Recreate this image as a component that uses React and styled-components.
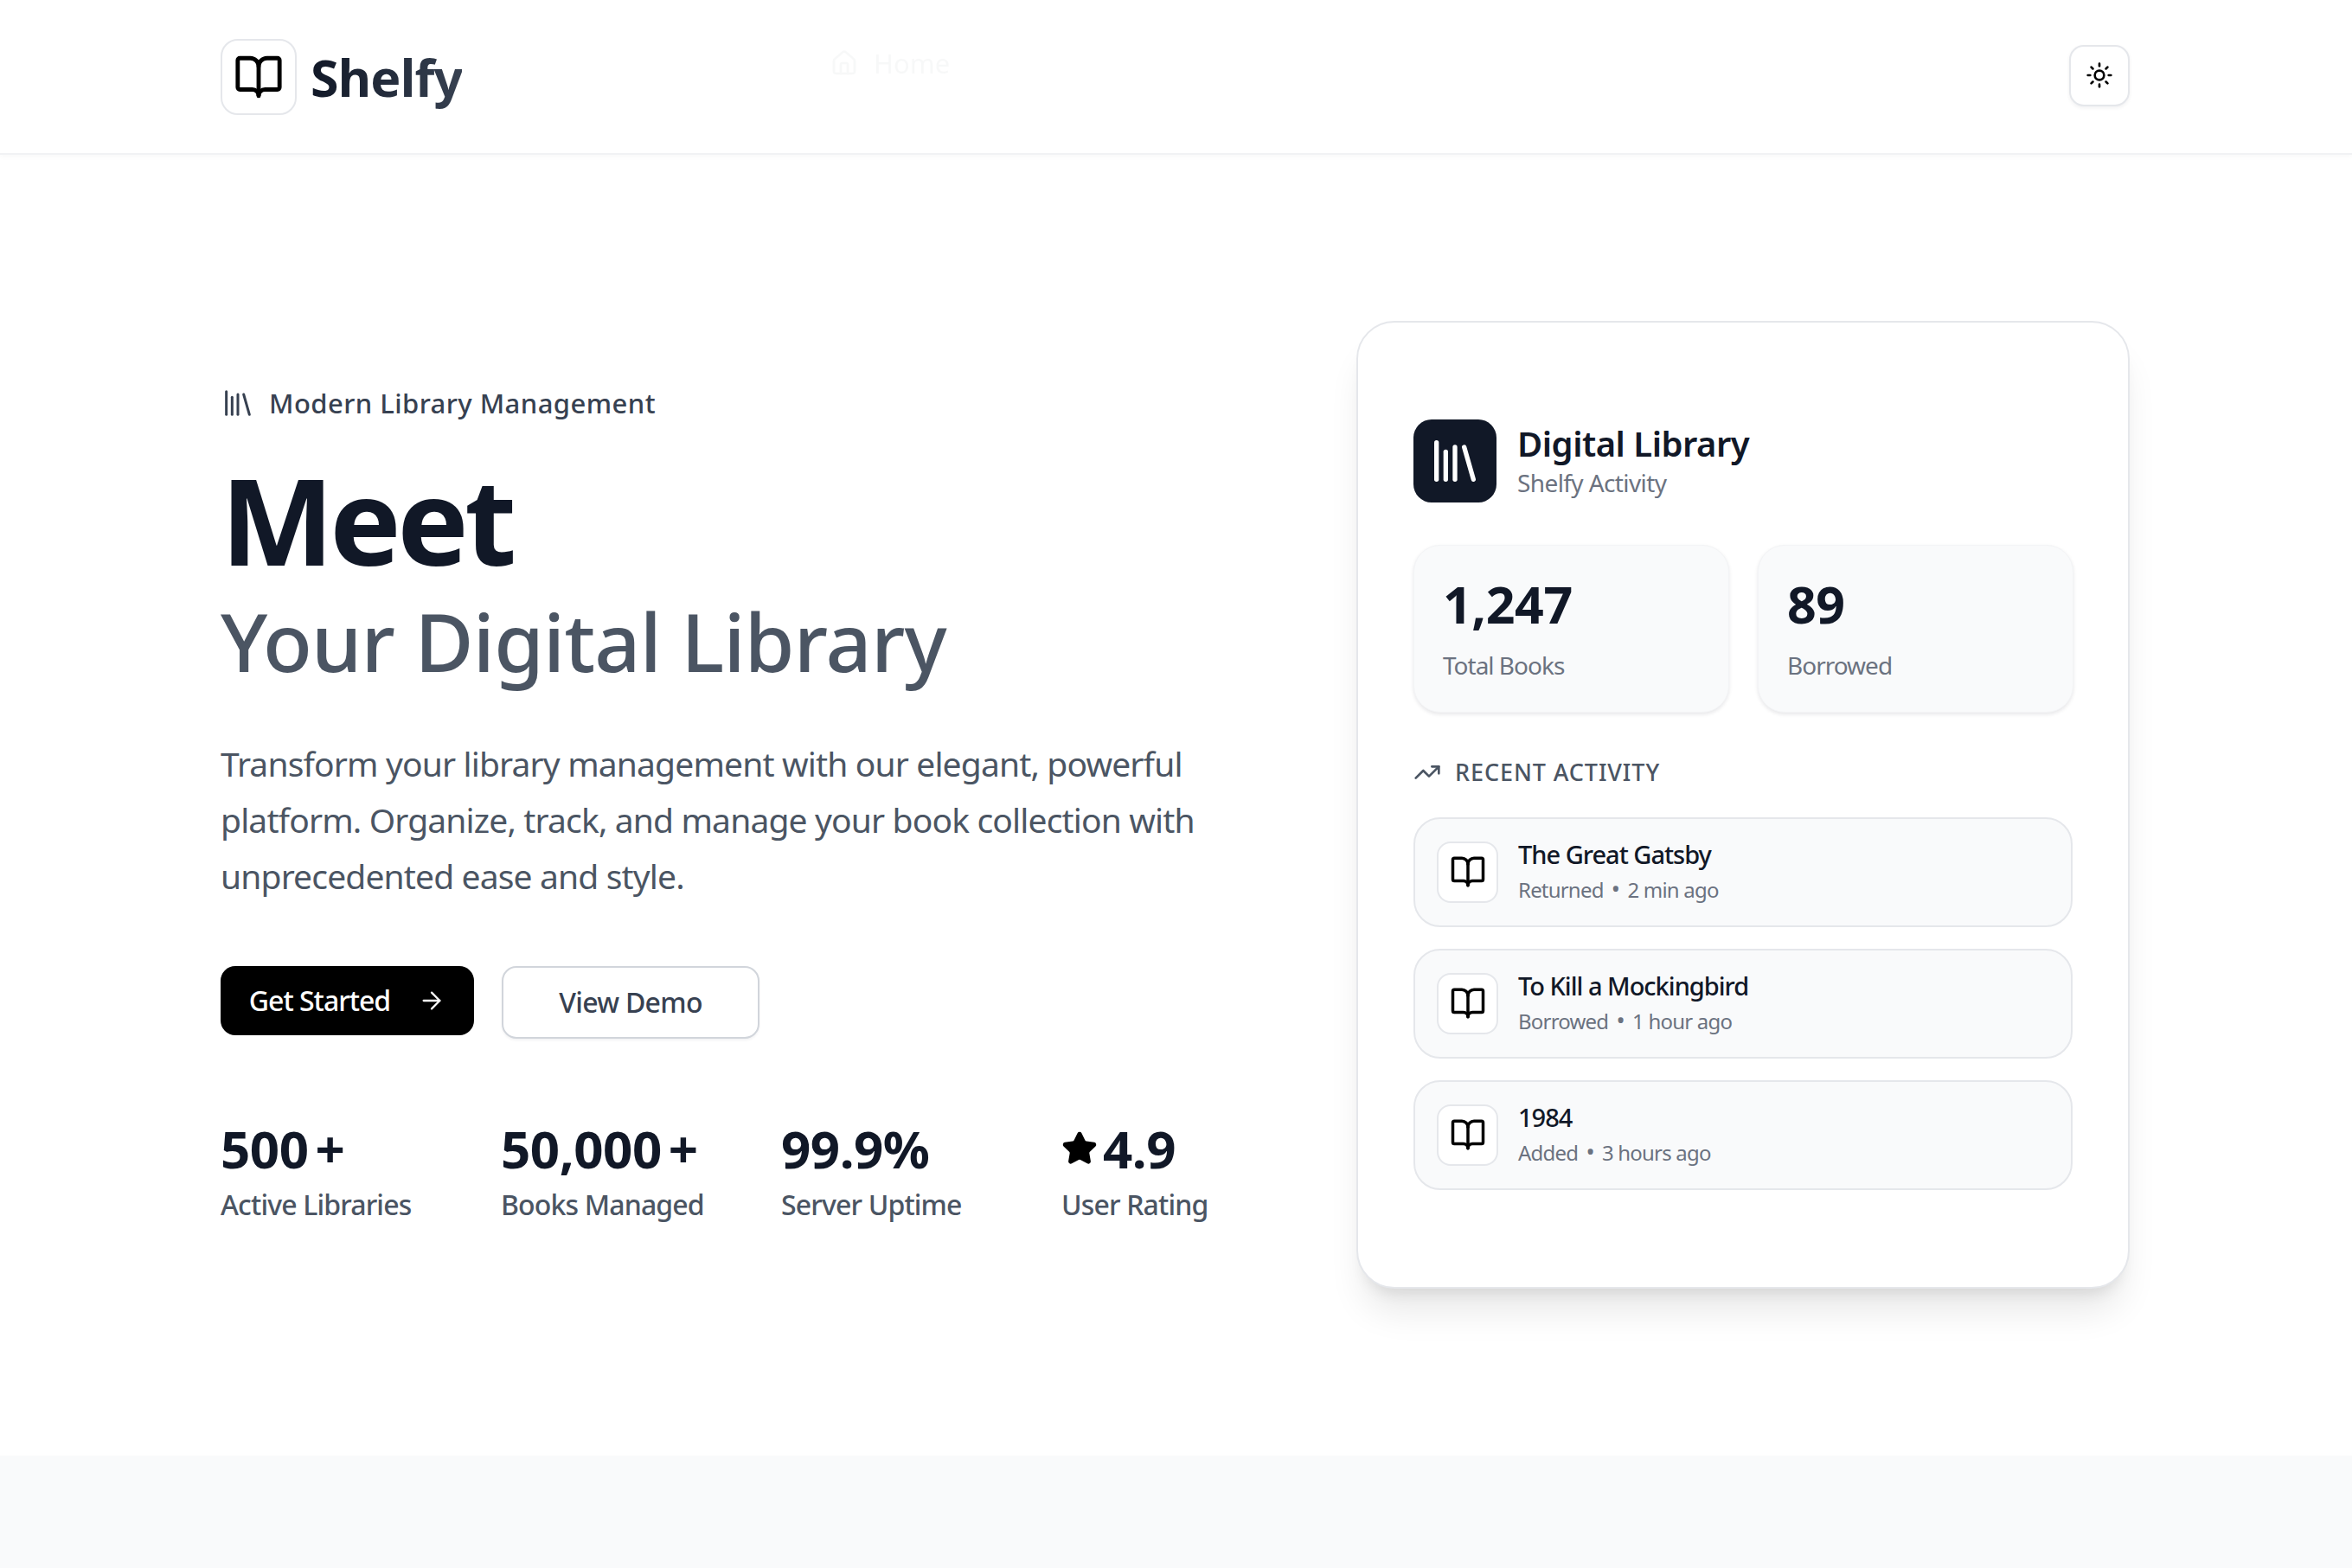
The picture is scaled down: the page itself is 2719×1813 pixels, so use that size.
import React from "react";
import styled, { createGlobalStyle } from "styled-components";
import { ArrowRight, BookOpen, House, Library, Star, Sun, TrendingUp } from "lucide-react";

const GlobalStyle = createGlobalStyle`
  html, body {
    margin: 0;
    padding: 0;
    background: #ffffff;
  }
  * {
    box-sizing: border-box;
  }
  body {
    font-family: "Noto Sans", "Open Sans", sans-serif;
    color: #111827;
  }
`;

const Page = styled.div`
  width: 2719px;
  height: 1813px;
  overflow: hidden;
  display: flex;
  flex-direction: column;
`;

const Nav = styled.header`
  height: 179px;
  flex: none;
  padding: 0 257px 0 255px;
  display: flex;
  align-items: center;
  justify-content: space-between;
  border-bottom: 2px solid #f1f2f4;
  box-shadow: 0 2px 6px rgba(17, 24, 39, 0.03);
  position: relative;
`;

const NavLeft = styled.div`
  display: flex;
  align-items: center;
`;

const Brand = styled.div`
  display: flex;
  align-items: center;
  gap: 16px;
  width: 705px;
`;

const LogoBox = styled.div`
  width: 88px;
  height: 88px;
  border: 2px solid #e5e7eb;
  border-radius: 20px;
  background: #fff;
  display: flex;
  align-items: center;
  justify-content: center;
  color: #000;
`;

const BrandName = styled.span`
  font-size: 59px;
  font-weight: 700;
  letter-spacing: -0.8px;
  line-height: 80px;
  background: linear-gradient(90deg, #111827, #374151);
  -webkit-background-clip: text;
  background-clip: text;
  color: transparent;
`;

const GhostLink = styled.a`
  display: flex;
  align-items: center;
  gap: 18px;
  font-size: 31px;
  color: #374151;
  opacity: 0.03;
  transform: translateY(-16px);
`;

const ThemeButton = styled.button`
  width: 70px;
  height: 71px;
  border: 2px solid #e5e7eb;
  border-radius: 17px;
  background: #fff;
  box-shadow: 0 2px 4px rgba(17, 24, 39, 0.06);
  display: flex;
  align-items: center;
  justify-content: center;
  padding: 0;
  color: #000;
  margin-top: -3px;
`;

const Hero = styled.main`
  flex: 1;
  padding: 0 257px 2px 255px;
  display: grid;
  grid-template-columns: minmax(0, 1fr) 894px;
  align-items: center;
  column-gap: 100px;
`;

const Copy = styled.section`
  display: flex;
  flex-direction: column;
  align-items: flex-start;
  padding-bottom: 2px;
`;

const Eyebrow = styled.div`
  display: flex;
  align-items: center;
  gap: 16px;
  font-size: 31px;
  font-weight: 500;
  line-height: 44px;
  color: #374151;
  letter-spacing: 0.45px;
`;

const Title = styled.h1`
  margin: 37px 0 0;
  font-size: 139px;
  font-weight: 700;
  line-height: 150px;
  letter-spacing: -5px;
  color: #111827;
`;

const Subtitle = styled.h2`
  margin: 5px 0 0;
  font-size: 93px;
  font-weight: 500;
  line-height: 122px;
  letter-spacing: -0.75px;
  color: #4b5563;
`;

const Lead = styled.p`
  margin: 48px 0 0;
  width: 1180px;
  font-size: 39px;
  line-height: 65px;
  color: #4b5563;
  letter-spacing: -0.85px;
`;

const Actions = styled.div`
  margin-top: 72px;
  display: flex;
  align-items: flex-start;
  gap: 32px;
`;

const PrimaryButton = styled.button`
  width: 293px;
  height: 80px;
  border: none;
  border-radius: 17px;
  background: #000;
  color: #fff;
  font: 500 32px "Noto Sans", sans-serif;
  letter-spacing: -1px;
  display: flex;
  align-items: center;
  justify-content: center;
  gap: 32px;
  padding: 0;
`;

const SecondaryButton = styled.button`
  width: 298px;
  height: 84px;
  border: 2px solid #d1d5db;
  border-radius: 17px;
  background: #fff;
  color: #374151;
  font: 500 32px "Noto Sans", sans-serif;
  letter-spacing: -0.7px;
  box-shadow: 0 2px 3px rgba(17, 24, 39, 0.05);
  padding: 0;
`;

const Stats = styled.div`
  margin-top: 88px;
  display: grid;
  grid-template-columns: repeat(4, 324px);
`;

const Stat = styled.div`
  display: flex;
  flex-direction: column;
`;

const StatValue = styled.div`
  display: flex;
  align-items: center;
  gap: 6px;
  font-size: 60px;
  font-weight: 700;
  line-height: 78px;
  color: #111827;
  letter-spacing: -0.5px;
`;

const Plus = styled.span`
  margin-left: 2px;
`;

const StatLabel = styled.div`
  margin-top: 4px;
  font-size: 32px;
  font-weight: 500;
  line-height: 44px;
  color: #4b5563;
  letter-spacing: -0.85px;
`;

const Card = styled.aside`
  height: 1119px;
  padding: 112px 64px;
  border: 2px solid #e5e7eb;
  border-radius: 44px;
  background: #fff;
  box-shadow: 0 34px 42px -8px rgba(0, 0, 0, 0.09), 0 14px 17px -10px rgba(0, 0, 0, 0.1);
`;

const CardHeader = styled.div`
  display: flex;
  align-items: center;
  gap: 24px;
`;

const CardIcon = styled.div`
  width: 96px;
  height: 96px;
  border-radius: 21px;
  background: #111827;
  color: #fff;
  display: flex;
  align-items: center;
  justify-content: center;
`;

const CardTitle = styled.div`
  font-size: 40px;
  font-weight: 600;
  line-height: 50px;
  color: #111827;
  letter-spacing: -0.5px;
`;

const CardSub = styled.div`
  font-size: 28px;
  line-height: 40px;
  color: #6b7280;
  letter-spacing: -0.6px;
`;

const MiniGrid = styled.div`
  margin-top: 49px;
  display: grid;
  grid-template-columns: 365px 365px;
  column-gap: 33px;
`;

const MiniCard = styled.div`
  height: 194px;
  padding: 28px 33px;
  border: 1px solid #f3f4f6;
  border-radius: 31px;
  background: #f9fafb;
  box-shadow: 0 2px 4px rgba(17, 24, 39, 0.1);
`;

const MiniValue = styled.div`
  font-size: 59px;
  font-weight: 700;
  line-height: 78px;
  color: #111827;
  letter-spacing: -0.4px;
`;

const MiniLabel = styled.div`
  margin-top: 13px;
  font-size: 28px;
  line-height: 38px;
  color: #6b7280;
  letter-spacing: -1px;
`;

const SectionHead = styled.div`
  margin-top: 48px;
  display: flex;
  align-items: center;
  gap: 16px;
  font-size: 27px;
  font-weight: 500;
  line-height: 42px;
  text-transform: uppercase;
  letter-spacing: 0.9px;
  color: #4b5563;
`;

const ActivityList = styled.div`
  margin-top: 31px;
  display: flex;
  flex-direction: column;
  gap: 25px;
`;

const ActivityRow = styled.div`
  height: 127px;
  padding: 0 25px;
  border: 2px solid #e5e7eb;
  border-radius: 31px;
  background: #f9fafb;
  display: flex;
  align-items: center;
  gap: 23px;
`;

const RowIcon = styled.div`
  width: 71px;
  height: 71px;
  flex: none;
  border: 2px solid #e5e7eb;
  border-radius: 16px;
  background: #fff;
  color: #000;
  display: flex;
  align-items: center;
  justify-content: center;
`;

const RowTitle = styled.div`
  font-size: 29px;
  font-weight: 500;
  line-height: 42px;
  color: #111827;
  letter-spacing: -1px;
`;

const RowMeta = styled.div`
  font-size: 24px;
  line-height: 40px;
  color: #6b7280;
  letter-spacing: -0.8px;
`;

const Dot = styled.span`
  margin: 0 3px;
  font-size: 27px;
  line-height: 1;
`;

const FooterBand = styled.div`
  height: 130px;
  flex: none;
  background: #f9fafb;
`;

const stats = [
  { value: "500", plus: true, label: "Active Libraries" },
  { value: "50,000", plus: true, label: "Books Managed" },
  { value: "99.9%", label: "Server Uptime" },
  { value: "4.9", label: "User Rating", star: true },
];

const activity = [
  { title: "The Great Gatsby", action: "Returned", time: "2 min ago" },
  { title: "To Kill a Mockingbird", action: "Borrowed", time: "1 hour ago" },
  { title: "1984", action: "Added", time: "3 hours ago" },
];

export default function App() {
  return (
    <Page>
      <GlobalStyle />
      <Nav>
        <NavLeft>
          <Brand>
            <LogoBox>
              <BookOpen size={58} strokeWidth={2} />
            </LogoBox>
            <BrandName>Shelfy</BrandName>
          </Brand>
          <GhostLink>
            <House size={32} />
            Home
          </GhostLink>
        </NavLeft>
        <ThemeButton>
          <Sun size={32} strokeWidth={2} />
        </ThemeButton>
      </Nav>

      <Hero>
        <Copy>
          <Eyebrow>
            <Library size={40} strokeWidth={1.8} />
            Modern Library Management
          </Eyebrow>
          <Title>Meet</Title>
          <Subtitle>Your Digital Library</Subtitle>
          <Lead>
            Transform your library management with our elegant, powerful platform. Organize, track, and manage your book collection with unprecedented ease and style.
          </Lead>
          <Actions>
            <PrimaryButton>
              Get Started
              <ArrowRight size={32} strokeWidth={1.7} />
            </PrimaryButton>
            <SecondaryButton>View Demo</SecondaryButton>
          </Actions>
          <Stats>
            {stats.map((stat) => (
              <Stat key={stat.label}>
                <StatValue>
                  {stat.star && <Star size={42} fill="#000" color="#000" />}
                  {stat.value}
                  {stat.plus && <Plus>+</Plus>}
                </StatValue>
                <StatLabel>{stat.label}</StatLabel>
              </Stat>
            ))}
          </Stats>
        </Copy>

        <Card>
          <CardHeader>
            <CardIcon>
              <Library size={64} strokeWidth={2} />
            </CardIcon>
            <div>
              <CardTitle>Digital Library</CardTitle>
              <CardSub>Shelfy Activity</CardSub>
            </div>
          </CardHeader>
          <MiniGrid>
            <MiniCard>
              <MiniValue>1,247</MiniValue>
              <MiniLabel>Total Books</MiniLabel>
            </MiniCard>
            <MiniCard>
              <MiniValue>89</MiniValue>
              <MiniLabel>Borrowed</MiniLabel>
            </MiniCard>
          </MiniGrid>
          <SectionHead>
            <TrendingUp size={32} strokeWidth={2} />
            Recent Activity
          </SectionHead>
          <ActivityList>
            {activity.map((item) => (
              <ActivityRow key={item.title}>
                <RowIcon>
                  <BookOpen size={42} strokeWidth={2} />
                </RowIcon>
                <div>
                  <RowTitle>{item.title}</RowTitle>
                  <RowMeta>
                    {item.action}
                    <Dot> • </Dot>
                    {item.time}
                  </RowMeta>
                </div>
              </ActivityRow>
            ))}
          </ActivityList>
        </Card>
      </Hero>

      <FooterBand />
    </Page>
  );
}
